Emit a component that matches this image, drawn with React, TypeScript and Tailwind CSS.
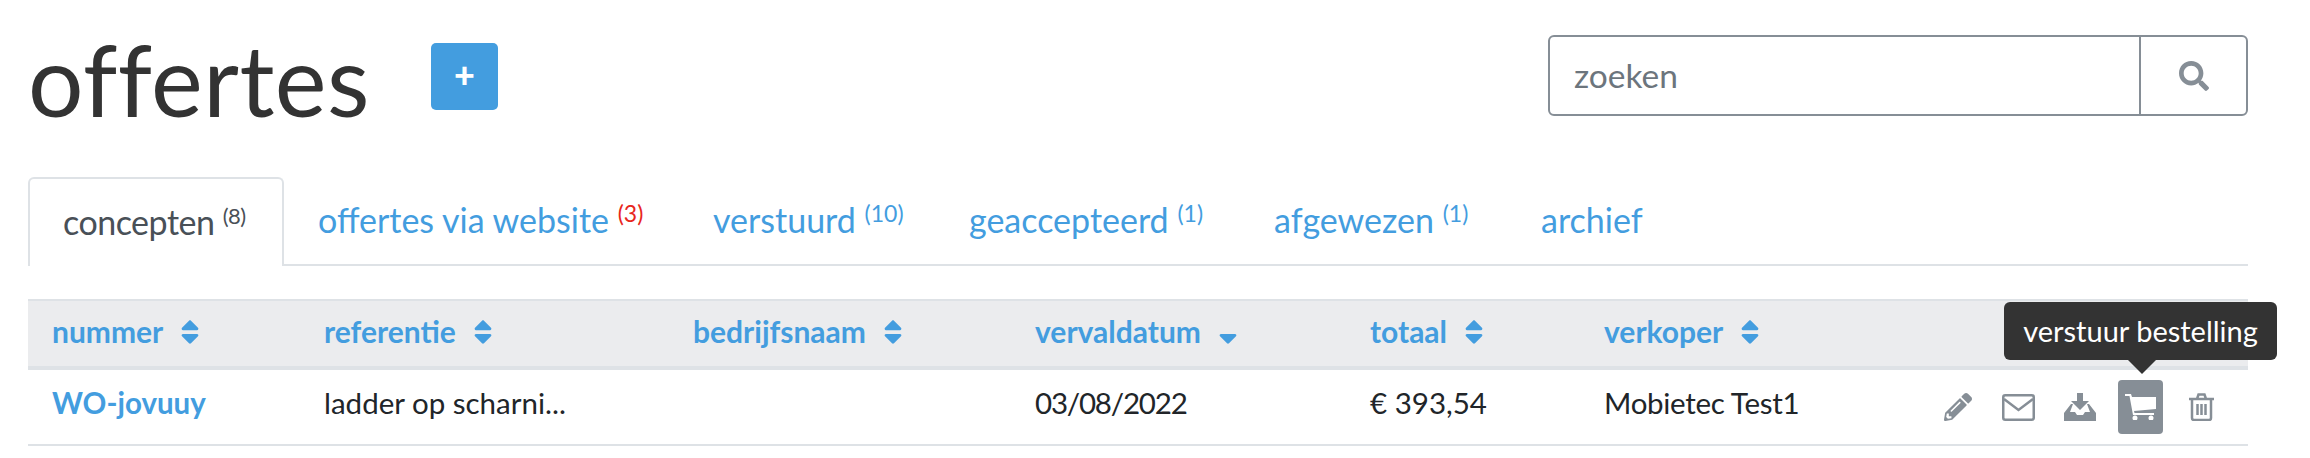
import { FaPencilAlt, FaSearch, FaSort, FaSortDown } from 'react-icons/fa';

const tabs = [
  { label: 'offertes via website', count: 3, alert: true, width: 'w-[395px]' },
  { label: 'verstuurd', count: 10, width: 'w-[256px]' },
  { label: 'geaccepteerd', count: 1, width: 'w-[305px]' },
  { label: 'afgewezen', count: 1, width: 'w-[267px]' },
  { label: 'archief', width: 'w-[180px]' },
];

const columns = [
  { label: 'nummer', width: 'w-[272px]' },
  { label: 'referentie', width: 'w-[369px]' },
  { label: 'bedrijfsnaam', width: 'w-[342px]' },
  { label: 'vervaldatum', width: 'w-[335px]', sorted: true },
  { label: 'totaal', width: 'w-[234px]' },
  { label: 'verkoper', width: 'w-[668px]' },
];

function MailIcon() {
  return (
    <svg viewBox="0 0 33 27" className="w-[33px] h-[27px] fill-none stroke-current stroke-[2.500px]">
      <rect x="1.250" y="1.250" width="30.500" height="24.500" rx="2" />
      <path d="M2 5l14.500 11L31 5" />
    </svg>
  );
}

function DownloadIcon() {
  return (
    <svg viewBox="0 0 32 28" className="w-[32px] h-[28px] fill-current">
      <path d="M13 0h6v8h6l-9 9-9-9h6z" />
      <path d="M7 11h2l-3 8h5l2 3h6l2-3h5l-3-8h2l7 9v8H0v-8z" />
    </svg>
  );
}

function CartIcon() {
  return (
    <svg viewBox="0 0 31 26" className="w-[31px] h-[26px] fill-current">
      <path d="M0 0h6l1 3h24v12l-22 2 .5 2H29v2H8L4.500 2H0z" />
      <circle cx="10" cy="24" r="2.500" />
      <circle cx="26" cy="24" r="2.500" />
    </svg>
  );
}

function TrashIcon() {
  return (
    <svg viewBox="0 0 25 28" className="w-[25px] h-[28px] fill-none stroke-current stroke-[2.500px]">
      <path d="M0 6h25M8 6l1.500-4.500h6L17 6M3 6v19a2 2 0 0 0 2 2h15a2 2 0 0 0 2-2V6M8.500 11v11M12.500 11v11M16.500 11v11" />
    </svg>
  );
}

export default function App() {
  return (
    <div className="w-[2310px] h-[458px] overflow-hidden bg-white pl-[28px] pr-[62px] font-['Lato',sans-serif] text-[#212529]">
      {/* Header */}
      <div className="flex items-start justify-between h-[177px]">
        <div className="flex items-start">
          <h1 className="text-[98px] leading-[110px] mt-[24px] text-[#333] tracking-[0.5px]">offertes</h1>
          <button className="mt-[43px] ml-[61px] w-[67px] h-[67px] rounded-[5px] bg-[#439ddf] text-white text-[36px] leading-none font-black flex items-center justify-center pb-[6px]">
            +
          </button>
        </div>
        <div className="mt-[35px] w-[700px] h-[81px] flex rounded-[6px] border-2 border-[#868e96]">
          <div className="flex-1 flex items-center pl-[24px] text-[33.500px] text-[#6c757d]">zoeken</div>
          <div className="w-[107px] flex items-center justify-center border-l-2 border-[#868e96] text-[#868e96]">
            <FaSearch className="w-[30px] h-[30px]" />
          </div>
        </div>
      </div>

      {/* Tabs */}
      <div className="flex h-[89px] border-b-2 border-[#dee2e6] text-[34px]">
        <div className="w-[256px] h-[89px] pl-[33px] pt-[17px] bg-white rounded-t-[6px] border-2 border-b-0 border-[#dee2e6] text-[#495057] whitespace-nowrap tracking-[-0.500px]">
          concepten <sup className="text-[22px]">(8)</sup>
        </div>
        {tabs.map((tab) => (
          <div key={tab.label} className={`${tab.width} pl-[34px] pt-[17px] text-[#439ddf] whitespace-nowrap`}>
            {tab.label}{' '}
            {tab.count && (
              <sup className={`text-[23px] ${tab.alert ? 'text-[#e8261c]' : ''}`}>({tab.count})</sup>
            )}
          </div>
        ))}
      </div>

      {/* Table */}
      <table className="mt-[33px] w-[2220px] table-fixed text-[29.500px]">
        <thead>
          <tr className="h-[68px] bg-[#ebecee] border-t-2 border-b-4 border-[#dee2e6]">
            {columns.map((col) => (
              <th key={col.label} className={`${col.width} pl-[24px] pb-[3px] text-left font-bold text-[#439ddf] whitespace-nowrap`}>
                <span className="inline-flex items-center gap-[17px] text-[30px]">
                  {col.label}
                  {col.sorted ? <FaSortDown className="w-[20px] h-[30px]" /> : <FaSort className="w-[20px] h-[30px]" />}
                </span>
              </th>
            ))}
          </tr>
        </thead>
        <tbody>
          <tr className="h-[77px] border-b-2 border-[#dee2e6]">
            <td className="pl-[24px] pb-[8px] font-bold text-[#439ddf]">WO-jovuuy</td>
            <td className="pl-[24px] pb-[8px]">ladder op scharni...</td>
            <td className="pl-[24px]" />
            <td className="pl-[24px] pb-[8px] tracking-[-1.200px]">03/08/2022</td>
            <td className="pl-[24px] pb-[8px]">€ 393,54</td>
            <td className="pl-[24px]">
              <div className="flex items-center justify-between">
                <span className="pb-[8px] tracking-[-0.300px]">Mobietec Test1</span>
                <div className="flex items-center mr-[34px] text-[#868e96]">
                  <FaPencilAlt className="w-[28px] h-[28px]" />
                  <span className="ml-[30px]">
                    <MailIcon />
                  </span>
                  <span className="ml-[29px]">
                    <DownloadIcon />
                  </span>
                  <div className="relative ml-[22px] w-[45px] h-[54px] rounded-[4px] bg-[#868e96] text-white flex items-center justify-center">
                    <CartIcon />
                    {/* Tooltip */}
                    <div className="absolute left-[-114px] bottom-[74px] w-[273px] h-[58px] rounded-[6px] bg-[#333] text-white text-[29px] flex items-center justify-center whitespace-nowrap">
                      verstuur bestelling
                      <span className="absolute top-full left-[124px] border-x-[14px] border-x-transparent border-t-[14px] border-t-[#333]" />
                    </div>
                  </div>
                  <span className="ml-[26px]">
                    <TrashIcon />
                  </span>
                </div>
              </div>
            </td>
          </tr>
        </tbody>
      </table>
    </div>
  );
}
